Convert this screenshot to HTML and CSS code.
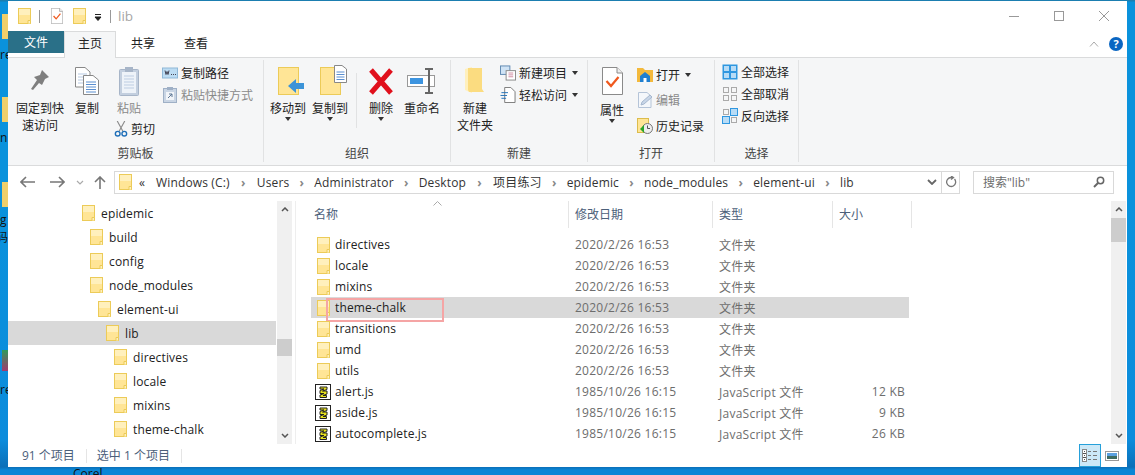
FILE: index.html

```html
<!DOCTYPE html>
<html lang="zh-CN">
<head>
    <meta charset="UTF-8">
    <title>lib</title>
    <link rel="stylesheet" href="styles.css">
</head>
<body>

    <svg class="defs" width="0" height="0">
        <symbol id="folder" viewBox="0 0 13 16">
            <rect x="0.5" y="0.5" width="12" height="15" fill="#ffe596" stroke="#eccb58"/>
            <rect x="1" y="1" width="11" height="6" fill="#fff0bd"/>
            <path d="M10 15.5V12.5H12.5V15.5" fill="#fff0bd" stroke="#eccb58"/>
        </symbol>
        <symbol id="jsfile" viewBox="0 0 16 16">
            <rect x="0.5" y="0.5" width="15" height="15" fill="#fff" stroke="#222"/>
            <path d="M5 3H12V5.500L7.500 7H12V10L8 11.500H11.500V13.500H5V11L9 9.500H5V6.500L9 5H5Z" fill="#e8e21e" stroke="#222" stroke-width="1"/>
        </symbol>
        <symbol id="doccheck" viewBox="0 0 21 28">
            <path d="M0.500 0.500H15L20.500 6V27.500H0.500Z" fill="#fff" stroke="#8a8a8a"/>
            <path d="M15 0.500V6H20.500" fill="#eee" stroke="#8a8a8a"/>
            <path d="M4.500 14L9 19L16.500 10" fill="none" stroke="#f0591e" stroke-width="2.200"/>
        </symbol>
    </svg>

    <div class="desk-item folder-a"></div>
    <div class="desk-item folder-b"></div>
    <div class="desk-item folder-c"></div>
    <div class="desk-item shell-icon"></div>
    <span class="desk-text txt-a">re</span>
    <span class="desk-text txt-b">n</span>
    <span class="desk-text txt-c">g</span>
    <span class="desk-text txt-d">码</span>
    <span class="desk-text txt-e">re</span>
    <span class="desk-text txt-f">Corel</span>

    <div class="window">

        <div class="titlebar">
            <svg class="ic-folder"><use href="#folder"/></svg>
            <i class="qa-sep"></i>
            <svg class="qa-doc" viewBox="0 0 21 28"><use href="#doccheck"/></svg>
            <svg class="ic-folder qa-folder"><use href="#folder"/></svg>
            <svg class="qa-down" viewBox="0 0 8 7"><path d="M1 0.500H7M1 3H7L4 6.500Z" stroke="#222" fill="#222"/></svg>
            <i class="qa-sep"></i>
            <span class="title">lib</span>
            <div class="win-btns">
                <svg viewBox="0 0 10 10"><path d="M0 5.500H10" stroke="#999"/></svg>
                <svg viewBox="0 0 10 10"><rect x="0.500" y="0.500" width="9" height="9" fill="none" stroke="#999"/></svg>
                <svg viewBox="0 0 10 10"><path d="M0 0L10 10M10 0L0 10" stroke="#999"/></svg>
            </div>
        </div>

        <div class="tabs">
            <span class="tab tab-file">文件</span>
            <span class="tab tab-on">主页</span>
            <span class="tab">共享</span>
            <span class="tab">查看</span>
            <svg class="collapse" viewBox="0 0 10 6"><path d="M1 5.500L5 1L9 5.500" fill="none" stroke="#aaa"/></svg>
            <span class="help">?</span>
        </div>

        <div class="ribbon">

            <div class="group g-clip">
                <div class="group-body">
                    <div class="big b-pin">
                        <svg class="big-ic" viewBox="0 0 24 31"><path d="M14 5L21 12L17 14L14 20L11 18L5 25L3 24L9 15L6 12L12 10Z" fill="#7f7f7f"/></svg>
                        <span>固定到快<br>速访问</span>
                    </div>
                    <div class="big b-copy">
                        <svg class="big-ic" viewBox="0 0 24 31">
                            <path d="M0.500 2.500H10L15 7V22H0.500Z" fill="#fff" stroke="#888"/>
                            <path d="M3 9H12M3 12H12M3 15H12M3 18H12" stroke="#b6c9e2"/>
                            <path d="M8.500 10.500H18L23.500 15V29.500H8.500Z" fill="#fff" stroke="#888"/>
                            <path d="M11 17H21M11 19.500H21M11 22H21M11 24.500H21M11 27H21" stroke="#5a8fd0"/>
                        </svg>
                        <span>复制</span>
                    </div>
                    <div class="clip-col">
                        <div class="big b-paste dim">
                            <svg class="big-ic" viewBox="0 0 20 31">
                                <rect x="0.500" y="4.500" width="19" height="26" rx="1" fill="#c3cfdf" stroke="#a7b5c8"/>
                                <rect x="3" y="7" width="14" height="21" fill="#eef3f9"/>
                                <path d="M5 11H15M5 14H15M5 17H15M5 20H15M5 23H15" stroke="#bdcde2"/>
                                <rect x="6" y="2" width="8" height="5" fill="#a7b5c8"/>
                            </svg>
                            <span>粘贴</span>
                        </div>
                        <div class="small">
                            <svg class="sm-ic" viewBox="0 0 14 17">
                                <path d="M3 0L9 11M11 0L5 11" stroke="#8a8a8a" stroke-width="1.200"/>
                                <circle cx="3.500" cy="13.500" r="2.500" fill="none" stroke="#1f6fb8" stroke-width="1.500"/>
                                <circle cx="10.500" cy="13.500" r="2.500" fill="none" stroke="#1f6fb8" stroke-width="1.500"/>
                            </svg>
                            <span>剪切</span>
                        </div>
                    </div>
                    <div class="small-col">
                        <div class="small">
                            <svg class="sm-ic" viewBox="0 0 16 11">
                                <rect x="0.500" y="0.500" width="15" height="10" fill="#bcdcf3" stroke="#8fb8d8"/>
                                <path d="M3 3L4 7L5 4L6 7L7 3M9 7H10M11 7H12M13 7H14" fill="none" stroke="#445"/>
                            </svg>
                            <span>复制路径</span>
                        </div>
                        <div class="small dim">
                            <svg class="sm-ic" viewBox="0 0 14 16">
                                <rect x="0.500" y="1.500" width="13" height="14" fill="#c9d5e4" stroke="#9fb0c6"/>
                                <rect x="3" y="5" width="8" height="8" fill="#f2f5f9"/>
                                <rect x="4" y="0" width="6" height="3" fill="#9fb0c6"/>
                                <path d="M5 11L9 7M6 7H9V10" fill="none" stroke="#5f7896"/>
                            </svg>
                            <span>粘贴快捷方式</span>
                        </div>
                    </div>
                </div>
                <div class="group-name">剪贴板</div>
            </div>

            <div class="group g-org">
                <div class="group-body">
                    <div class="big b-move">
                        <svg class="big-ic" viewBox="0 0 27 31">
                            <rect x="0.500" y="2.500" width="20" height="27" fill="#ffe596" stroke="#eccb58"/>
                            <path d="M10 21L18 14V18H26V24H18V28Z" fill="#3c94d8"/>
                        </svg>
                        <span>移动到</span>
                        <i class="caret"></i>
                    </div>
                    <div class="big b-copyto">
                        <svg class="big-ic" viewBox="0 0 27 31">
                            <rect x="0.500" y="2.500" width="20" height="27" fill="#ffe596" stroke="#eccb58"/>
                            <path d="M14.500 0.500H22L26.500 4V17.500H14.500Z" fill="#fff" stroke="#888"/>
                            <path d="M16.500 7H24.500M16.500 9.500H24.500M16.500 12H24.500M16.500 14.500H24.500" stroke="#5a8fd0"/>
                        </svg>
                        <span>复制到</span>
                        <i class="caret"></i>
                    </div>
                    <i class="inner-sep"></i>
                    <div class="big b-del">
                        <svg class="big-ic" viewBox="0 0 26 31"><path d="M3 5L23 28M23 5L3 28" stroke="#e0101c" stroke-width="5"/></svg>
                        <span>删除</span>
                        <i class="caret"></i>
                    </div>
                    <div class="big b-ren">
                        <svg class="big-ic" viewBox="0 0 34 31">
                            <rect x="2.500" y="10.500" width="27" height="11" fill="#fff" stroke="#999"/>
                            <rect x="5" y="13" width="13" height="6" fill="#3c94e0"/>
                            <path d="M20 4H28M20 28H28M24 4V28" fill="none" stroke="#666" stroke-width="2"/>
                        </svg>
                        <span>重命名</span>
                    </div>
                </div>
                <div class="group-name">组织</div>
            </div>

            <div class="group g-new">
                <div class="group-body">
                    <div class="big b-newf">
                        <svg class="big-ic" viewBox="0 0 22 31">
                            <path d="M1 4L8 2V28L1 25Z" fill="#fff0bd"/>
                            <path d="M4 3H18V24L20 27H5L4 25Z" fill="#fbdc80"/>
                        </svg>
                        <span>新建<br>文件夹</span>
                    </div>
                    <div class="small-col">
                        <div class="small">
                            <svg class="sm-ic" viewBox="0 0 17 16">
                                <rect x="0.500" y="0.500" width="10" height="9" fill="#cfe3f5" stroke="#5d87b0"/>
                                <rect x="6.500" y="5.500" width="10" height="10" fill="#fff" stroke="#888"/>
                                <path d="M9 8H14M9 10H14M9 12H14" stroke="#d08aa0"/>
                            </svg>
                            <span>新建项目</span>
                            <i class="caret inline"></i>
                        </div>
                        <div class="small">
                            <svg class="sm-ic" viewBox="0 0 16 17">
                                <path d="M4.500 0.500H11L15.500 5V16.500H4.500Z" fill="#fff" stroke="#777"/>
                                <path d="M1 6H8M0 9H7M1 12H6" stroke="#1f6fb8"/>
                            </svg>
                            <span>轻松访问</span>
                            <i class="caret inline"></i>
                        </div>
                    </div>
                </div>
                <div class="group-name">新建</div>
            </div>

            <div class="group g-open">
                <div class="group-body">
                    <div class="big b-prop">
                        <svg class="big-ic"><use href="#doccheck"/></svg>
                        <span>属性</span>
                        <i class="caret"></i>
                    </div>
                    <div class="small-col open-col">
                        <div class="small">
                            <svg class="sm-ic" viewBox="0 0 16 14">
                                <path d="M0 0H6L8 2H16V14H0Z" fill="#f3b93c"/>
                                <path d="M3 8L8 4L13 8V14H3Z" fill="#1f7fd0"/>
                                <rect x="6.500" y="10" width="3" height="4" fill="#fff"/>
                            </svg>
                            <span>打开</span>
                            <i class="caret inline"></i>
                        </div>
                        <div class="small dim">
                            <svg class="sm-ic" viewBox="0 0 16 16">
                                <path d="M1.500 0.500H10L14 4V15.500H1.500Z" fill="#f4f7fb" stroke="#b5c4d8"/>
                                <path d="M4 13L5 10L13 3L15 5L7 12Z" fill="#c8d6e8" stroke="#a7b8cf"/>
                            </svg>
                            <span>编辑</span>
                        </div>
                        <div class="small">
                            <svg class="sm-ic" viewBox="0 0 16 16">
                                <rect x="0.500" y="0.500" width="11" height="14" fill="#ffe596" stroke="#dcbc4c"/>
                                <circle cx="10.500" cy="10.500" r="5" fill="#eee" stroke="#777"/>
                                <path d="M10.500 7.500V10.500H13" fill="none" stroke="#555"/>
                                <path d="M3 11L7 7V15Z" fill="#2aa52a"/>
                            </svg>
                            <span>历史记录</span>
                        </div>
                    </div>
                </div>
                <div class="group-name">打开</div>
            </div>

            <div class="group g-sel">
                <div class="group-body">
                    <div class="small-col">
                        <div class="small">
                            <svg class="sm-ic" viewBox="0 0 16 16">
                                <rect x="0.500" y="0.500" width="15" height="15" fill="#2f97e0"/>
                                <rect x="2" y="2" width="5" height="5" fill="#b8dcf6"/>
                                <rect x="9" y="2" width="5" height="5" fill="#b8dcf6"/>
                                <rect x="2" y="9" width="5" height="5" fill="#b8dcf6"/>
                                <rect x="9" y="9" width="5" height="5" fill="#b8dcf6"/>
                            </svg>
                            <span>全部选择</span>
                        </div>
                        <div class="small">
                            <svg class="sm-ic" viewBox="0 0 16 16" fill="none" stroke="#aaa">
                                <rect x="1.500" y="1.500" width="5" height="5"/>
                                <rect x="9.500" y="1.500" width="5" height="5"/>
                                <rect x="1.500" y="9.500" width="5" height="5"/>
                                <rect x="9.500" y="9.500" width="5" height="5"/>
                            </svg>
                            <span>全部取消</span>
                        </div>
                        <div class="small">
                            <svg class="sm-ic" viewBox="0 0 16 16">
                                <rect x="1.500" y="1.500" width="5" height="5" fill="none" stroke="#aaa"/>
                                <rect x="8.500" y="0.500" width="7" height="7" fill="#b8dcf6" stroke="#2f97e0"/>
                                <rect x="0.500" y="8.500" width="7" height="7" fill="#b8dcf6" stroke="#2f97e0"/>
                                <rect x="9.500" y="9.500" width="5" height="5" fill="none" stroke="#aaa"/>
                            </svg>
                            <span>反向选择</span>
                        </div>
                    </div>
                </div>
                <div class="group-name">选择</div>
            </div>

        </div>

        <div class="addr-row">
            <svg class="nav-btn back" viewBox="0 0 15 12"><path d="M6 1L1 6L6 11M1 6H15" fill="none" stroke="#777" stroke-width="1.600"/></svg>
            <svg class="nav-btn fwd" viewBox="0 0 15 12"><path d="M9 1L14 6L9 11M0 6H14" fill="none" stroke="#777" stroke-width="1.600"/></svg>
            <svg class="nav-drop" viewBox="0 0 8 5"><path d="M1 1L4 4L7 1" fill="none" stroke="#aaa" stroke-width="1.200"/></svg>
            <svg class="nav-btn up" viewBox="0 0 12 13"><path d="M1 6L6 1L11 6M6 1V13" fill="none" stroke="#777" stroke-width="1.600"/></svg>
            <div class="addr-box">
                <svg class="ic-folder"><use href="#folder"/></svg>
                <span class="more">«</span>
                <span>Windows (C:)</span><i class="arrow wide">›</i>
                <span>Users</span><i class="arrow">›</i>
                <span>Administrator</span><i class="arrow">›</i>
                <span>Desktop</span><i class="arrow wide">›</i>
                <span>项目练习</span><i class="arrow">›</i>
                <span>epidemic</span><i class="arrow">›</i>
                <span>node_modules</span><i class="arrow">›</i>
                <span>element-ui</span><i class="arrow">›</i>
                <span>lib</span>
                <svg class="addr-down" viewBox="0 0 10 6"><path d="M1 1L5 5L9 1" fill="none" stroke="#666" stroke-width="1.800"/></svg>
                <div class="addr-refresh">
                    <svg viewBox="0 0 12 12"><path d="M9.500 3A4.500 4.500 0 1 1 6 1.500H8M6 0L8.500 1.500L6 3.500" fill="none" stroke="#777" stroke-width="1.300"/></svg>
                </div>
            </div>
            <div class="search-box">
                <span>搜索"lib"</span>
                <svg viewBox="0 0 12 12"><circle cx="7.500" cy="4.500" r="3.200" fill="none" stroke="#666" stroke-width="1.500"/><path d="M5 7L1 11" stroke="#666" stroke-width="2"/></svg>
            </div>
        </div>

        <div class="main">
            <div class="tree">
                <div class="tree-row d0"><svg class="ic-folder"><use href="#folder"/></svg>epidemic</div>
                <div class="tree-row d1"><svg class="ic-folder"><use href="#folder"/></svg>build</div>
                <div class="tree-row d1"><svg class="ic-folder"><use href="#folder"/></svg>config</div>
                <div class="tree-row d1"><svg class="ic-folder"><use href="#folder"/></svg>node_modules</div>
                <div class="tree-row d2"><svg class="ic-folder"><use href="#folder"/></svg>element-ui</div>
                <div class="tree-row d3 on"><svg class="ic-folder"><use href="#folder"/></svg>lib</div>
                <div class="tree-row d4"><svg class="ic-folder"><use href="#folder"/></svg>directives</div>
                <div class="tree-row d4"><svg class="ic-folder"><use href="#folder"/></svg>locale</div>
                <div class="tree-row d4"><svg class="ic-folder"><use href="#folder"/></svg>mixins</div>
                <div class="tree-row d4"><svg class="ic-folder"><use href="#folder"/></svg>theme-chalk</div>
            </div>
            <div class="scroll scroll-tree">
                <svg class="sb-arrow" viewBox="0 0 8 5"><path d="M1 4L4 1L7 4" fill="none" stroke="#555" stroke-width="1.500"/></svg>
                <div class="sb-track"><i class="sb-thumb"></i></div>
                <svg class="sb-arrow" viewBox="0 0 8 5"><path d="M1 1L4 4L7 1" fill="none" stroke="#555" stroke-width="1.500"/></svg>
            </div>

            <div class="list">
                <div class="list-head">
                    <span>名称</span>
                    <span>修改日期</span>
                    <span>类型</span>
                    <span>大小</span>
                    <svg class="sort" viewBox="0 0 9 5"><path d="M0.500 4.500L4.500 0.500L8.500 4.500" fill="none" stroke="#aaa"/></svg>
                </div>
                <div class="rows">
                    <div class="row"><span class="name"><svg class="ic-folder"><use href="#folder"/></svg>directives</span><span>2020/2/26 16:53</span><span>文件夹</span><span></span></div>
                    <div class="row"><span class="name"><svg class="ic-folder"><use href="#folder"/></svg>locale</span><span>2020/2/26 16:53</span><span>文件夹</span><span></span></div>
                    <div class="row"><span class="name"><svg class="ic-folder"><use href="#folder"/></svg>mixins</span><span>2020/2/26 16:53</span><span>文件夹</span><span></span></div>
                    <div class="row on"><span class="name"><svg class="ic-folder"><use href="#folder"/></svg>theme-chalk</span><span>2020/2/26 16:53</span><span>文件夹</span><span></span><i class="mark"></i></div>
                    <div class="row"><span class="name"><svg class="ic-folder"><use href="#folder"/></svg>transitions</span><span>2020/2/26 16:53</span><span>文件夹</span><span></span></div>
                    <div class="row"><span class="name"><svg class="ic-folder"><use href="#folder"/></svg>umd</span><span>2020/2/26 16:53</span><span>文件夹</span><span></span></div>
                    <div class="row"><span class="name"><svg class="ic-folder"><use href="#folder"/></svg>utils</span><span>2020/2/26 16:53</span><span>文件夹</span><span></span></div>
                    <div class="row js"><span class="name"><svg class="ic-js"><use href="#jsfile"/></svg>alert.js</span><span>1985/10/26 16:15</span><span>JavaScript 文件</span><span class="size">12 KB</span></div>
                    <div class="row js"><span class="name"><svg class="ic-js"><use href="#jsfile"/></svg>aside.js</span><span>1985/10/26 16:15</span><span>JavaScript 文件</span><span class="size">9 KB</span></div>
                    <div class="row js"><span class="name"><svg class="ic-js"><use href="#jsfile"/></svg>autocomplete.js</span><span>1985/10/26 16:15</span><span>JavaScript 文件</span><span class="size">26 KB</span></div>
                </div>
            </div>
            <div class="scroll scroll-list">
                <svg class="sb-arrow" viewBox="0 0 8 5"><path d="M1 4L4 1L7 4" fill="none" stroke="#555" stroke-width="1.500"/></svg>
                <div class="sb-track"><i class="sb-thumb"></i></div>
                <svg class="sb-arrow" viewBox="0 0 8 5"><path d="M1 1L4 4L7 1" fill="none" stroke="#555" stroke-width="1.500"/></svg>
            </div>
        </div>

        <div class="status">
            <span class="st-cell">91 个项目</span>
            <span class="st-cell">选中 1 个项目</span>
            <div class="view-btn on">
                <svg viewBox="0 0 16 13">
                    <rect x="0.500" y="0.500" width="4" height="12" fill="#fff" stroke="#888"/>
                    <path d="M1 4.500H4M1 8.500H4M2 2.500H3M2 6.500H3M2 10.500H3" stroke="#555"/>
                    <path d="M6 2.500H9M11 2.500H15M6 6.500H9M11 6.500H15M6 10.500H9M11 10.500H15" stroke="#777"/>
                </svg>
            </div>
            <div class="view-btn">
                <svg viewBox="0 0 14 10">
                    <rect x="0.500" y="0.500" width="13" height="9" fill="#fff" stroke="#999"/>
                    <rect x="2" y="2" width="10" height="3" fill="#5aa0e0"/>
                    <rect x="2" y="5" width="10" height="3" fill="#3d6b60"/>
                </svg>
            </div>
        </div>

    </div>

</body>
</html>
```

FILE: styles.css

```css
* {
    box-sizing: border-box;
}
html, body {
    margin: 0;
    height: 475px;
    overflow: hidden;
}
body {
    position: relative;
    font-family: "Open Sans", "Noto Sans CJK SC", sans-serif;
    font-size: 12px;
    color: #222;
    background: linear-gradient(180deg, #1b7eb0 0, #1b7eb0 1px, #0a92dc 2px, #0a92dc 200px, #0c8cdc 440px, #0b6fb8 467px, #0a86d6 470px);
}
.defs {
    position: absolute;
}
i {
    font-style: normal;
}

/* desktop behind the window */
.desk-item {
    position: absolute;
    left: 2px;
    width: 6px;
    height: 25px;
    background: #f0cf6a;
}
.folder-a { top: 14px; }
.folder-b { top: 97px; }
.folder-c { top: 182px; }
.shell-icon {
    top: 350px;
    height: 21px;
    background: linear-gradient(180deg, #2f9a5a, #a03a70);
}
.desk-text {
    position: absolute;
    color: #111;
    font-size: 12px;
    line-height: 14px;
}
.txt-a { left: 0; top: 48px; }
.txt-b { left: 0; top: 131px; }
.txt-c { left: 0; top: 213px; }
.txt-d { left: -4px; top: 231px; }
.txt-e { left: 0; top: 383px; }
.txt-f { left: 73px; top: 467px; }

.window {
    position: absolute;
    left: 8px;
    top: 1px;
    width: 1119px;
    height: 466px;
    background: #fff;
    display: flex;
    flex-direction: column;
}
.ic-folder {
    width: 13px;
    height: 16px;
    flex: none;
}

/* title bar */
.titlebar {
    height: 30px;
    display: flex;
    align-items: center;
    padding-left: 10px;
}
.qa-sep {
    width: 1px;
    height: 13px;
    background: #999;
    margin: 0 12px 0 8px;
}
.qa-doc {
    width: 12px;
    height: 16px;
    margin-left: -1px;
}
.qa-folder {
    margin-left: 10px;
}
.qa-down {
    width: 8px;
    height: 7px;
    margin: 2px 0 0 8px;
}
.qa-down + .qa-sep {
    margin-left: 8px;
    margin-right: 7px;
}
.title {
    font-size: 13.5px;
    color: #a5a5a5;
}
.win-btns {
    margin-left: auto;
    display: flex;
    gap: 35px;
    padding-right: 18px;
}
.win-btns svg {
    width: 10px;
    height: 10px;
}

/* tabs */
.tabs {
    height: 27px;
    display: flex;
    align-items: flex-start;
    border-bottom: 1px solid #dadbdc;
}
.tab {
    width: 52px;
    height: 26px;
    text-align: center;
    line-height: 25px;
}
.tab-file {
    width: 56px;
    height: 22px;
    background: #2a7088;
    color: #fff;
    line-height: 24px;
}
.tab-on {
    width: 52px;
    height: 27px;
    background: #f5f6f7;
    border: 1px solid #dadbdc;
    border-bottom: none;
    line-height: 24px;
}
.tab + .tab + .tab {
    margin-left: 1px;
}
.collapse {
    width: 10px;
    height: 6px;
    margin: 10px 0 0 auto;
}
.help {
    width: 14px;
    height: 14px;
    margin: 6px 4px 0 10px;
    border-radius: 50%;
    background: #0a66c2;
    color: #fff;
    font-weight: bold;
    font-size: 11px;
    line-height: 14px;
    text-align: center;
}

/* ribbon */
.ribbon {
    height: 108px;
    display: flex;
    background: #f5f6f7;
    border-bottom: 1px solid #dadbdc;
    padding-top: 2px;
}
.group {
    height: 102px;
    display: flex;
    flex-direction: column;
    border-right: 1px solid #e1e2e3;
}
.g-clip { width: 256px; }
.g-org { width: 187px; }
.g-new { width: 137px; }
.g-open { width: 127px; }
.g-sel { width: 84px; }
.group-body {
    flex: 1;
    display: flex;
    padding-top: 5px;
}
.group-name {
    height: 18px;
    text-align: center;
    color: #444;
    line-height: 19px;
}
.big {
    display: flex;
    flex-direction: column;
    align-items: center;
    text-align: center;
    line-height: 17px;
    flex: none;
}
.big-ic {
    width: 24px;
    height: 31px;
    margin-bottom: 4px;
    flex: none;
}
.dim {
    color: #8a8a8a;
}
.caret {
    width: 0;
    height: 0;
    border: 3px solid transparent;
    border-top: 4px solid #333;
    border-bottom: none;
}
.caret.inline {
    margin: 0 0 0 5px;
}
.small {
    display: flex;
    align-items: center;
    height: 22px;
    flex: none;
}
.sm-ic {
    width: 16px;
    height: 16px;
    margin-right: 3px;
    flex: none;
}
.small-col {
    display: flex;
    flex-direction: column;
    flex: none;
    margin-top: -3px;
}
.b-pin { width: 48px; margin-left: 8px; }
.b-copy { width: 24px; margin-left: 11px; }
.clip-col {
    width: 42px;
    margin-left: 15px;
    flex: none;
}
.b-paste { width: 24px; margin-left: 3px; }
.clip-col .small {
    height: 20px;
    margin-top: 2px;
}
.clip-col .sm-ic { width: 14px; }
.clip-col + .small-col { margin-left: 6px; }
.b-move { width: 36px; margin-left: 6px; }
.b-move .big-ic, .b-copyto .big-ic { width: 27px; margin-left: 7px; }
.b-copyto { width: 36px; margin-left: 6px; }
.inner-sep {
    width: 1px;
    height: 55px;
    background: #e1e2e3;
    margin: 8px 11px 0 8px;
    flex: none;
}
.b-del { width: 26px; }
.b-del .big-ic { width: 26px; }
.b-ren { width: 36px; margin-left: 10px; }
.b-ren .big-ic { width: 34px; }
.b-newf { width: 36px; margin-left: 6px; }
.b-newf .big-ic { width: 22px; }
.b-newf + .small-col { margin-left: 7px; }
.b-prop { width: 24px; margin-left: 12px; }
.b-prop .big-ic { width: 21px; height: 28px; margin: 2px 0 7px; }
.open-col { margin-left: 13px; }
.open-col .small { height: 25.5px; }
.g-sel .small-col { margin: -4px 0 0 7px; }

/* address bar */
.addr-row {
    height: 31px;
    display: flex;
    align-items: center;
    padding-top: 1px;
}
.nav-btn {
    width: 15px;
    height: 12px;
    flex: none;
}
.back { margin-left: 12px; }
.fwd { margin-left: 15px; }
.nav-drop {
    width: 8px;
    height: 5px;
    margin-left: 11px;
}
.up {
    width: 12px;
    height: 13px;
    margin-left: 10px;
}
.addr-box {
    width: 846px;
    height: 23px;
    margin-left: 8px;
    border: 1px solid #d9d9d9;
    display: flex;
    align-items: center;
    padding-left: 4px;
    white-space: nowrap;
    color: #333;
    letter-spacing: 0.15px;
}
.more {
    width: 24px;
    padding-left: 7px;
}
.arrow {
    width: 25px;
    text-align: center;
    color: #888;
    font-weight: bold;
}
.arrow.wide {
    width: 27px;
}
.addr-down {
    width: 10px;
    height: 6px;
    margin-left: auto;
    margin-right: 2px;
}
.addr-refresh {
    width: 18px;
    height: 21px;
    margin-left: 2px;
    border-left: 1px solid #d9d9d9;
    display: flex;
    align-items: center;
    justify-content: center;
}
.addr-refresh svg {
    width: 12px;
    height: 12px;
}
.search-box {
    width: 141px;
    height: 23px;
    margin-left: 13px;
    border: 1px solid #d9d9d9;
    display: flex;
    align-items: center;
    justify-content: space-between;
    padding: 0 8px 0 9px;
    color: #6d6d6d;
}
.search-box svg {
    width: 12px;
    height: 12px;
}

/* panes */
.main {
    height: 247px;
    display: flex;
}
.tree {
    width: 268px;
    padding-top: 4px;
    flex: none;
}
.tree-row {
    height: 24px;
    display: flex;
    align-items: center;
    gap: 6px;
    white-space: nowrap;
    letter-spacing: 0.15px;
}
.tree-row.on {
    background: #d9d9d9;
}
.d0 { padding-left: 74px; }
.d1 { padding-left: 82px; }
.d2 { padding-left: 90px; }
.d3 { padding-left: 98px; }
.d4 { padding-left: 106px; }

.scroll {
    width: 15px;
    margin-top: 4px;
    background: #f0f0f0;
    display: flex;
    flex-direction: column;
    align-items: center;
    flex: none;
}
.scroll-tree {
    margin-left: 1px;
    margin-right: 3px;
}
.sb-arrow {
    width: 8px;
    height: 5px;
    margin: 6px 0;
    flex: none;
}
.sb-track {
    flex: 1;
    width: 100%;
}
.sb-thumb {
    display: block;
    width: 100%;
    height: 17px;
    background: #cdcdcd;
}
.scroll-tree .sb-thumb { margin-top: 121px; }
.scroll-list .sb-thumb { height: 24px; }

.list {
    width: 816px;
    border-left: 1px solid #eee;
    margin-top: 4px;
    flex: none;
}
.list-head {
    position: relative;
    height: 27px;
    display: grid;
    grid-template-columns: 272px 144px 120px 80px;
    width: 616px;
    line-height: 27px;
    color: #4c607a;
}
.list-head span {
    padding-left: 6px;
    border-left: 1px solid #e5e5e5;
}
.list-head span:first-child {
    padding-left: 18px;
    border-left: none;
}
.list-head span:nth-child(4) {
    border-right: 1px solid #e5e5e5;
}
.sort {
    position: absolute;
    left: 137px;
    top: 0;
    width: 9px;
    height: 5px;
}
.rows {
    width: 598px;
    margin: 6px 0 0 15px;
}
.row {
    position: relative;
    height: 21px;
    display: grid;
    grid-template-columns: 264px 144px 120px 70px;
    align-items: center;
    color: #6d6d6d;
    white-space: nowrap;
    letter-spacing: 0.25px;
}
.row.on {
    background: #d9d9d9;
}
.name {
    display: flex;
    align-items: center;
    gap: 5px;
    padding-left: 6px;
    color: #222;
    letter-spacing: 0.15px;
}
.ic-js {
    width: 16px;
    height: 16px;
    flex: none;
}
.js .name {
    padding-left: 4px;
    gap: 4px;
}
.size {
    text-align: right;
    padding-right: 4px;
}
.mark {
    position: absolute;
    left: 15px;
    top: 1px;
    width: 118px;
    height: 24px;
    border: 2px solid #f5a5a5;
}

/* status bar */
.status {
    height: 23px;
    display: flex;
    align-items: center;
    padding-left: 14px;
    color: #4c607a;
}
.st-cell {
    padding-right: 11px;
    margin-right: 10px;
    border-right: 1px solid #e5e5e5;
    line-height: 14px;
}
.view-btn {
    width: 14px;
    height: 23px;
    display: flex;
    align-items: center;
    justify-content: center;
    margin: 0 8px 0 4px;
}
.view-btn svg {
    width: 14px;
    height: 10px;
}
.view-btn.on {
    width: 22px;
    margin: 0 0 0 auto;
    background: #cce8f7;
    border: 1px solid #26a0da;
}
.view-btn.on svg {
    width: 16px;
    height: 13px;
}
```
